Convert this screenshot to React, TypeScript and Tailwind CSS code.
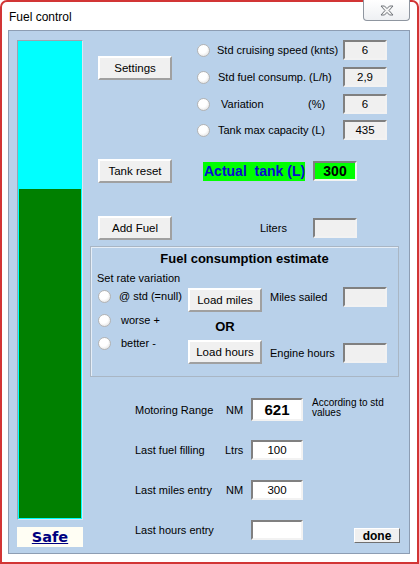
import React from "react";

const F = { fontFamily: '"Liberation Sans", Arial, sans-serif' };

function Btn({ label, cls = "" }: { label: string; cls?: string }) {
  return (
    <div
      className={`flex items-center justify-center w-[74px] h-[24px] bg-[#f0f0f0] border-2 border-t-white border-l-white border-r-[#a0a0a0] border-b-[#a0a0a0] text-[11.5px] text-black ${cls}`}
    >
      {label}
    </div>
  );
}

function Radio() {
  return (
    <div className="w-[13px] h-[13px] rounded-full border border-[#b4b4b4] bg-[radial-gradient(circle_at_40%_35%,#ffffff_45%,#d6d6d6_100%)] shrink-0" />
  );
}

function Box({
  value,
  cls = "",
}: {
  value?: string;
  cls?: string;
}) {
  return (
    <div
      className={`flex items-center justify-center border-2 border-t-[#808080] border-l-[#808080] border-r-[#f2f2f2] border-b-[#f2f2f2] text-[11.5px] text-black ${cls}`}
    >
      {value}
    </div>
  );
}

export default function App() {
  return (
    <div
      style={F}
      className="relative w-[419px] h-[564px] bg-white border-2 border-[#d23535] rounded-t-[7px] pl-[6px] pr-[7px] pt-[28px] pb-[8px] text-black text-[11px] leading-[14px]"
    >
      {/* title */}
      <div className="absolute left-[7px] top-[7px] text-[12px] leading-[16px]">Fuel control</div>
      <div className="absolute top-[-2px] right-[7px] w-[47px] h-[21px] rounded-b-[4px] border border-t-0 border-[#8f96a0] bg-gradient-to-b from-white to-[#eef0f3] flex items-center justify-center">
        <svg width="14" height="11" viewBox="0 0 14 11">
          <path
            d="M1 1 H4.5 L7 3.6 L9.5 1 H13 L9 5.5 L13 10 H9.5 L7 7.4 L4.5 10 H1 L5 5.5 Z"
            fill="#f4f4f4"
            stroke="#6f7378"
            strokeWidth="1"
            strokeLinejoin="round"
          />
        </svg>
      </div>

      {/* client */}
      <div className="flex h-[524px] border border-[#8d9db3] bg-[#b9d1ea]">
        {/* left gauge column */}
        <div className="w-[74px] shrink-0 pl-[8px] pt-[9px] flex flex-col">
          <div className="w-[66px] h-[480px] border border-t-[#9aa4b0] border-l-[#9aa4b0] border-r-[#d9e6f3] border-b-[#d9e6f3] bg-[#00ffff] flex flex-col justify-end px-[1px] pb-[1px]">
            <div className="w-full h-[329px] bg-[#008000]" />
          </div>
          <div className="mt-[7px] w-[66px] h-[20px] bg-[#fffef4] flex items-center justify-center">
            <span className="leading-[18px] font-bold underline text-[#000080]" style={{ fontFamily: '"DejaVu Sans", Verdana, sans-serif', fontSize: "14.5px" }}>
              Safe
            </span>
          </div>
        </div>

        {/* right column */}
        <div className="flex-1 flex flex-col">
          {/* section A */}
          <div className="mt-[9px] flex">
            <div className="ml-[15px] w-[74px]">
              <Btn label="Settings" cls="mt-[16px]" />
            </div>
            <div className="ml-[25px] flex flex-col">
              <div className="flex items-center h-[20px]">
                <Radio />
                <span className="ml-[7px] w-[126px]">Std cruising speed (knts)</span>
                <Box value="6" cls="w-[44px] h-[20px] bg-[#f0f0f0]" />
              </div>
              <div className="flex items-center h-[20px] mt-[7px]">
                <Radio />
                <span className="ml-[8px] w-[125px]">Std fuel consump. (L/h)</span>
                <Box value="2,9" cls="w-[44px] h-[20px] bg-[#f0f0f0]" />
              </div>
              <div className="flex items-center h-[20px] mt-[7px]">
                <Radio />
                <span className="ml-[11px] w-[87px]">Variation</span>
                <span className="w-[35px]">(%)</span>
                <Box value="6" cls="w-[44px] h-[20px] bg-[#f0f0f0]" />
              </div>
              <div className="flex items-center h-[20px] mt-[6px]">
                <Radio />
                <span className="ml-[8px] w-[125px]">Tank max capacity (L)</span>
                <Box value="435" cls="w-[44px] h-[20px] bg-[#f0f0f0]" />
              </div>
            </div>
          </div>

          {/* section B */}
          <div className="mt-[19px] flex items-center">
            <Btn label="Tank reset" cls="ml-[15px]" />
            <div className="ml-[31px] w-[102px] h-[19px] bg-[#00ff00] flex items-center pl-[1px]">
              <span className="font-bold text-[14px] leading-[16px] text-[#0a0ad0] whitespace-pre">Actual  tank (L)</span>
            </div>
            <Box value="300" cls="ml-[8px] w-[44px] h-[20px] bg-[#00ff00] font-bold !text-[14px]" />
          </div>

          {/* section C */}
          <div className="mt-[33px] flex items-center">
            <Btn label="Add Fuel" cls="ml-[15px]" />
            <span className="ml-[88px] w-[53px]">Liters</span>
            <Box cls="w-[44px] h-[20px] bg-[#f0f0f0]" />
          </div>

          {/* group box */}
          <div className="mt-[6px] ml-[7px] w-[309px] h-[131px] border border-[#a9b6c4] shadow-[inset_1px_1px_0_#e6eef7] flex flex-col">
            <div className="pt-[4px] text-center font-bold text-[13px] leading-[16px]">Fuel consumption estimate</div>
            <div className="mt-[4px] pl-[6px] h-[14px]">Set rate variation</div>
            <div className="mt-[1px] flex">
              {/* radios */}
              <div className="w-[97px] pl-[7px] flex flex-col">
                <div className="flex items-center h-[20px]">
                  <Radio />
                  <span className="ml-[8px]">@ std (=null)</span>
                </div>
                <div className="flex items-center h-[20px] mt-[4px]">
                  <Radio />
                  <span className="ml-[10px]">worse +</span>
                </div>
                <div className="flex items-center h-[20px] mt-[3px]">
                  <Radio />
                  <span className="ml-[10px]">better -</span>
                </div>
              </div>
              {/* buttons */}
              <div className="w-[74px] flex flex-col items-center">
                <Btn label="Load miles" cls="mt-[2px]" />
                <div className="mt-[7px] h-[16px] font-bold text-[13px] leading-[16px]">OR</div>
                <Btn label="Load hours" cls="mt-[5px]" />
              </div>
              {/* right */}
              <div className="ml-[8px] flex flex-col">
                <div className="mt-[1px] flex items-center h-[20px]">
                  <span className="w-[73px]">Miles sailed</span>
                  <Box cls="w-[44px] h-[20px] bg-[#f0f0f0]" />
                </div>
                <div className="mt-[36px] flex items-center h-[20px]">
                  <span className="w-[73px]">Engine hours</span>
                  <Box cls="w-[44px] h-[20px] bg-[#f0f0f0]" />
                </div>
              </div>
            </div>
          </div>

          {/* bottom rows */}
          <div className="mt-[21px] flex items-center h-[23px]">
            <span className="ml-[52px] w-[91px]">Motoring Range</span>
            <span className="w-[25px]">NM</span>
            <Box value="621" cls="w-[52px] h-[23px] bg-white font-bold !text-[15px]" />
            <div className="ml-[9px] self-start text-[10px] leading-[10px] w-[80px]">
              According to std values
            </div>
          </div>
          <div className="mt-[19px] flex items-center h-[20px]">
            <span className="ml-[52px] w-[90px]">Last fuel filling</span>
            <span className="w-[26px]">Ltrs</span>
            <Box value="100" cls="w-[52px] h-[20px] bg-white" />
          </div>
          <div className="mt-[20px] flex items-center h-[20px]">
            <span className="ml-[52px] w-[91px]">Last miles entry</span>
            <span className="w-[25px]">NM</span>
            <Box value="300" cls="w-[52px] h-[20px] bg-white" />
          </div>
          <div className="mt-[20px] flex items-start h-[22px]">
            <span className="ml-[52px] w-[116px] h-[20px] flex items-center">Last hours entry</span>
            <Box cls="w-[52px] h-[20px] bg-white" />
            <div className="ml-[51px] mt-[8px] w-[46px] h-[15px] bg-[#f0f0f0] border border-t-white border-l-white border-r-[#707070] border-b-[#707070] flex items-center justify-center font-bold text-[12px] leading-[12px]">
              done
            </div>
          </div>
        </div>
      </div>
    </div>
  );
}
